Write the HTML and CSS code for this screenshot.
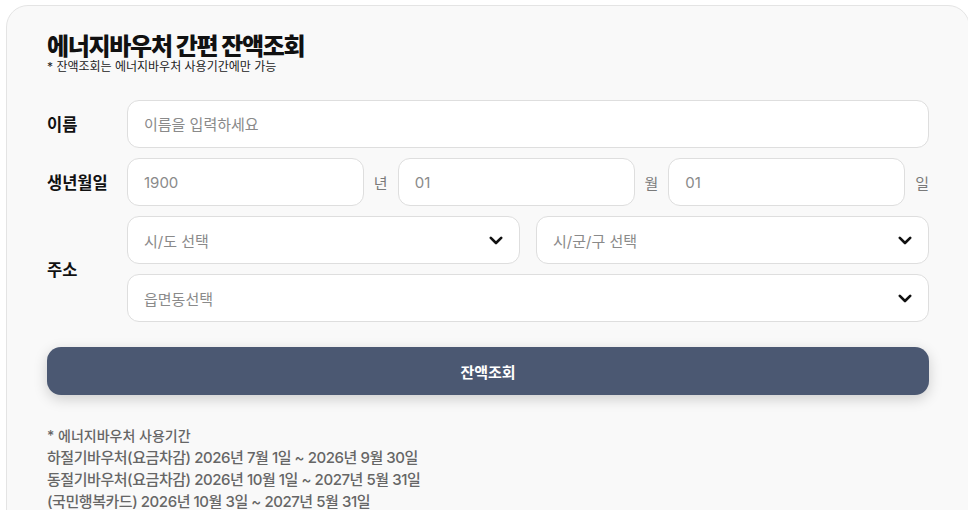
FILE: index.html
```html
<!DOCTYPE html>
<html lang="ko">
<head>
    <meta charset="UTF-8">
    <meta name="viewport" content="width=device-width, initial-scale=1.0">
    <title>에너지바우처 간편 잔액조회</title>
    <link rel="stylesheet" href="styles.css">
</head>
<body>
    <div class="card">
        <h1 class="title">에너지바우처 간편 잔액조회</h1>
        <p class="subtitle">* 잔액조회는 에너지바우처 사용기간에만 가능</p>

        <form class="form">
            <label class="label" for="name">이름</label>
            <input class="field" id="name" type="text" placeholder="이름을 입력하세요">

            <label class="label" for="year">생년월일</label>
            <div class="birth">
                <input class="field" id="year" type="text" placeholder="1900">
                <span class="unit">년</span>
                <input class="field" type="text" placeholder="01">
                <span class="unit">월</span>
                <input class="field" type="text" placeholder="01">
                <span class="unit">일</span>
            </div>

            <span class="label">주소</span>
            <div class="address">
                <div class="address-row">
                    <div class="field select">
                        <span>시/도 선택</span>
                        <svg width="14" height="9" viewBox="0 0 14 9"><path d="M1.8 1.8 7 7 12.2 1.8" fill="none" stroke="#111" stroke-width="2.6" stroke-linecap="round" stroke-linejoin="round"/></svg>
                    </div>
                    <div class="field select">
                        <span>시/군/구 선택</span>
                        <svg width="14" height="9" viewBox="0 0 14 9"><path d="M1.8 1.8 7 7 12.2 1.8" fill="none" stroke="#111" stroke-width="2.6" stroke-linecap="round" stroke-linejoin="round"/></svg>
                    </div>
                </div>
                <div class="field select">
                    <span>읍면동선택</span>
                    <svg width="14" height="9" viewBox="0 0 14 9"><path d="M1.8 1.8 7 7 12.2 1.8" fill="none" stroke="#111" stroke-width="2.6" stroke-linecap="round" stroke-linejoin="round"/></svg>
                </div>
            </div>

            <button class="submit" type="button">잔액조회</button>
        </form>

        <div class="notes">
            <p class="notes-head">* 에너지바우처 사용기간</p>
            <p>하절기바우처(요금차감) 2026년 7월 1일 ~ 2026년 9월 30일</p>
            <p>동절기바우처(요금차감) 2026년 10월 1일 ~ 2027년 5월 31일</p>
            <p>(국민행복카드) 2026년 10월 3일 ~ 2027년 5월 31일</p>
        </div>
    </div>
</body>
</html>
```

FILE: styles.css
```css
body {
    margin: 0;
    padding: 5px 0 0 6px;
    background-color: #ffffff;
    font-family: Inter, "Noto Sans CJK KR", sans-serif;
    color: #111111;
    overflow: hidden;
}

.card {
    width: 882px;
    padding: 28px 40px 40px 40px;
    background-color: #f9f9f9;
    border: 1px solid #e4e4e4;
    border-radius: 22px;
}

.title {
    margin: 0;
    font-size: 24px;
    font-weight: 800;
    letter-spacing: -1.3px;
    line-height: 26px;
}

.subtitle {
    margin: 0;
    font-size: 12px;
    line-height: 14px;
    color: #222222;
}

.form {
    display: grid;
    grid-template-columns: 80px minmax(0, 1fr);
    row-gap: 10px;
    margin-top: 26px;
}

.label {
    align-self: center;
    font-size: 16.5px;
    font-weight: 700;
}

.field {
    box-sizing: border-box;
    height: 48px;
    padding: 0 16px;
    background-color: #ffffff;
    border: 1px solid #dedede;
    border-radius: 12px;
    font-family: inherit;
    font-size: 15px;
    color: #333333;
    outline: none;
    min-width: 0;
}

.field::placeholder,
.select span {
    color: #8a8a8a;
}

.birth {
    display: flex;
    align-items: center;
    gap: 10px;
}

.birth .field {
    flex: 1;
    width: 0;
}

.unit {
    font-size: 15px;
    color: #7a7a7a;
}

.address {
    display: flex;
    flex-direction: column;
    gap: 10px;
}

.address-row {
    display: flex;
    gap: 16px;
}

.address-row .select {
    flex: 1;
}

.select {
    display: flex;
    align-items: center;
    justify-content: space-between;
}

.submit {
    grid-column: 1 / 3;
    height: 48px;
    margin-top: 15px;
    background-color: #4b5872;
    border: none;
    border-radius: 14px;
    box-shadow: 0 4px 14px rgba(0, 0, 0, 0.18);
    font-family: inherit;
    font-size: 15px;
    font-weight: 700;
    color: #ffffff;
}

.notes {
    margin-top: 30px;
    color: #666666;
    font-size: 15px;
    font-weight: 500;
    letter-spacing: -0.45px;
}

.notes p {
    margin: 0;
    line-height: 22px;
}

.notes .notes-head {
    font-size: 14px;
    letter-spacing: 0;
}
```
